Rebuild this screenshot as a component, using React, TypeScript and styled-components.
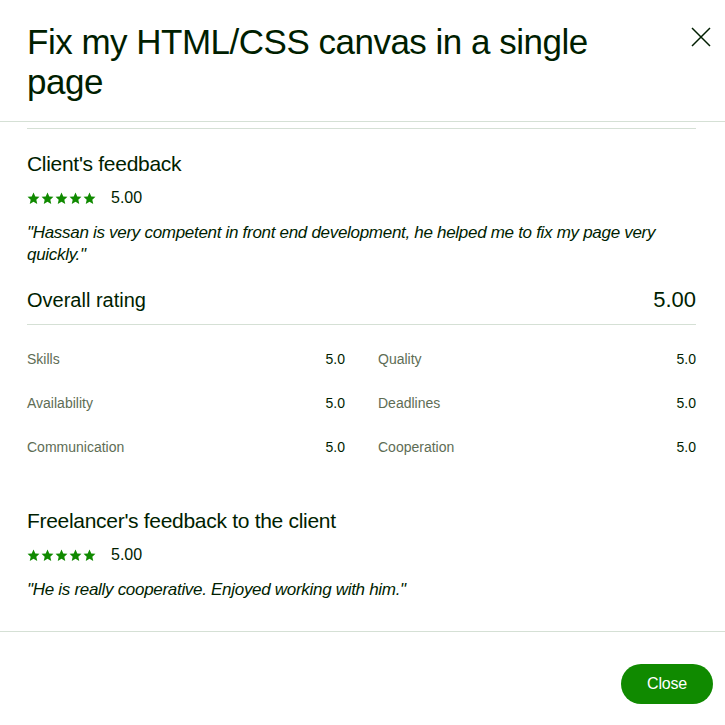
import React from 'react';
import styled, { createGlobalStyle } from 'styled-components';

const GlobalStyle = createGlobalStyle`
  html, body {
    margin: 0;
    padding: 0;
    background: #ffffff;
  }
  body {
    font-family: "Liberation Sans", Arial, sans-serif;
    color: #001e00;
  }
`;

interface IScore {
  label: string;
  value: string;
}

const scores: IScore[] = [
  { label: 'Skills', value: '5.0' },
  { label: 'Quality', value: '5.0' },
  { label: 'Availability', value: '5.0' },
  { label: 'Deadlines', value: '5.0' },
  { label: 'Communication', value: '5.0' },
  { label: 'Cooperation', value: '5.0' },
];

function Star() {
  return (
    <svg width="13" height="13" viewBox="0 0 24 24" aria-hidden="true">
      <path
        fill="#108a00"
        d="M12 1l3.3 7.1 7.7.8-5.8 5.3 1.7 7.8L12 18l-6.9 4 1.7-7.8L1 8.9l7.7-.8z"
      />
    </svg>
  );
}

function Rating({ value }: { value: string }) {
  return (
    <RatingRow>
      <Stars>
        {[0, 1, 2, 3, 4].map((i) => (
          <Star key={i} />
        ))}
      </Stars>
      <RatingValue>{value}</RatingValue>
    </RatingRow>
  );
}

export default function App() {
  return (
    <>
      <GlobalStyle />
      <Modal>
        <Header>
          <Title>Fix my HTML/CSS canvas in a single page</Title>
          <CloseIcon type="button" aria-label="Close">
            <svg width="20" height="20" viewBox="0 0 20 20">
              <path d="M1 1L19 19M19 1L1 19" stroke="#001e00" strokeWidth="1.5" fill="none" />
            </svg>
          </CloseIcon>
        </Header>
        <Body>
          <Section>
            <SectionTitle>Client's feedback</SectionTitle>
            <Rating value="5.00" />
            <Quote>"Hassan is very competent in front end development, he helped me to fix my page very quickly."</Quote>
          </Section>

          <OverallRow>
            <OverallLabel>Overall rating</OverallLabel>
            <OverallValue>5.00</OverallValue>
          </OverallRow>

          <ScoreGrid>
            {scores.map((s) => (
              <ScoreItem key={s.label}>
                <ScoreLabel>{s.label}</ScoreLabel>
                <ScoreValue>{s.value}</ScoreValue>
              </ScoreItem>
            ))}
          </ScoreGrid>

          <Section>
            <SectionTitle>Freelancer's feedback to the client</SectionTitle>
            <Rating value="5.00" />
            <Quote>"He is really cooperative. Enjoyed working with him."</Quote>
          </Section>
        </Body>
        <Footer>
          <PrimaryButton type="button">Close</PrimaryButton>
        </Footer>
      </Modal>
    </>
  );
}

const Modal = styled.div`
  width: 725px;
  height: 725px;
  display: flex;
  flex-direction: column;
  background: #fff;
`;

const Header = styled.div`
  display: flex;
  align-items: flex-start;
  justify-content: space-between;
  padding: 22px 14px 19px 27px;
  border-bottom: 1px solid #d5e0d5;
`;

const Title = styled.h2`
  margin: 0;
  max-width: 600px;
  font-size: 35px;
  line-height: 40px;
  font-weight: 400;
  letter-spacing: -0.5px;
  color: #001e00;
`;

const CloseIcon = styled.button`
  border: 0;
  background: none;
  padding: 0;
  margin-top: 5px;
  cursor: pointer;
  display: flex;
`;

const Body = styled.div`
  flex: 1;
  margin: 6px 29px 0 27px;
  border-top: 1px solid #d5e0d5;
  padding-top: 21px;
`;

const Section = styled.div`
  display: flex;
  flex-direction: column;
`;

const SectionTitle = styled.h3`
  margin: 0;
  font-size: 21px;
  line-height: 28px;
  font-weight: 400;
  letter-spacing: -0.3px;
  color: #001e00;
`;

const RatingRow = styled.div`
  display: flex;
  align-items: center;
  gap: 15px;
  margin-top: 11px;
`;

const Stars = styled.div`
  display: flex;
  gap: 1px;
`;

const RatingValue = styled.span`
  font-size: 16px;
  line-height: 18px;
  color: #001e00;
`;

const Quote = styled.p`
  margin: 15px 0 0;
  font-size: 17px;
  line-height: 22px;
  font-style: italic;
  letter-spacing: -0.3px;
  color: #001e00;
`;

const OverallRow = styled.div`
  display: flex;
  align-items: center;
  justify-content: space-between;
  margin-top: 20px;
  padding-bottom: 10px;
  border-bottom: 1px solid #d5e0d5;
`;

const OverallLabel = styled.span`
  font-size: 20px;
  line-height: 28px;
`;

const OverallValue = styled.span`
  font-size: 22px;
  line-height: 28px;
`;

const ScoreGrid = styled.div`
  display: grid;
  grid-template-columns: 1fr 1fr;
  column-gap: 33px;
  row-gap: 26px;
  padding-top: 25px;
  padding-bottom: 51px;
`;

const ScoreItem = styled.div`
  display: flex;
  justify-content: space-between;
  font-size: 14px;
  line-height: 18px;
`;

const ScoreLabel = styled.span`
  color: #5e6d55;
`;

const ScoreValue = styled.span`
  color: #001e00;
`;

const Footer = styled.div`
  display: flex;
  justify-content: flex-end;
  padding: 32px 12px 21px;
  border-top: 1px solid #d5e0d5;
`;

const PrimaryButton = styled.button`
  height: 40px;
  padding: 0 26px;
  border: 0;
  border-radius: 20px;
  background: #108a00;
  color: #fff;
  font-family: "Liberation Sans", Arial, sans-serif;
  font-size: 16px;
  letter-spacing: -0.2px;
  cursor: pointer;
`;
